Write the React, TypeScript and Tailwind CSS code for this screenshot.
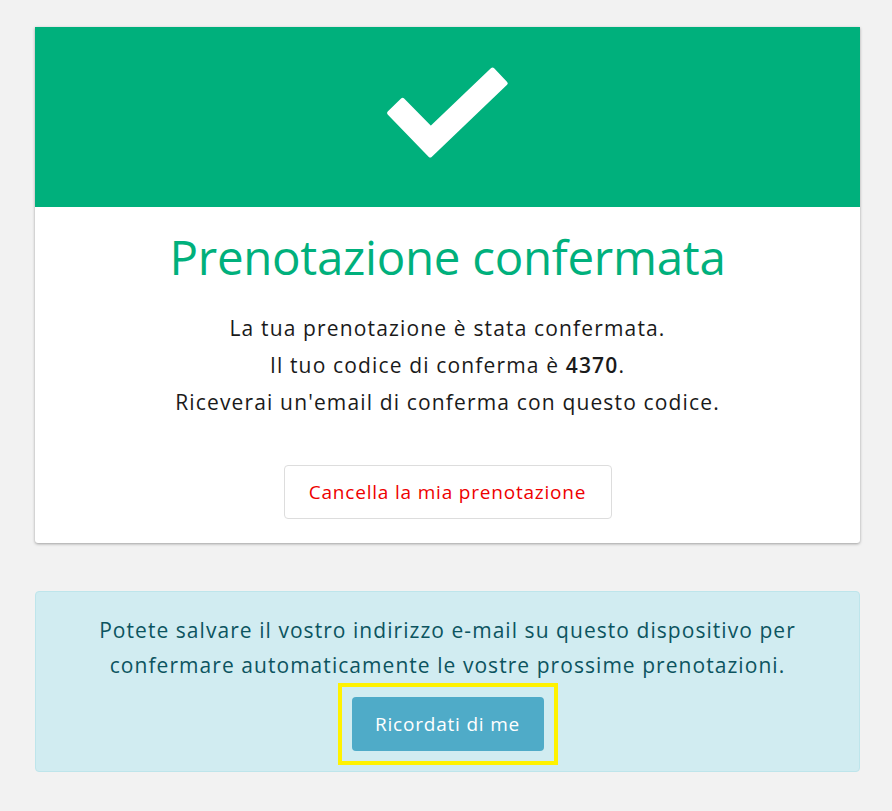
import React from "react";

export default function App() {
  return (
    <div className="min-h-[811px] w-full bg-[#f2f2f2] pl-[35px] pr-[32px] pt-[27px] pb-[38px]" style={{ fontFamily: "'Open Sans', Lato, sans-serif" }}>
      <div className="bg-white rounded-b-[3px] shadow-[0_1px_3px_rgba(0,0,0,0.35)]">
        <div className="h-[180px] bg-[#00b07c] flex items-center justify-center">
          <svg width="130" height="110" viewBox="0 0 130 110">
            <polygon
              points="6.1,51 19.7,37.8 47.75,66.5 109.5,7.5 122.7,21.3 47.25,93.5"
              fill="#fff"
              stroke="#fff"
              strokeWidth="4"
              strokeLinejoin="round"
            />
          </svg>
        </div>
        <div className="flex flex-col items-center pt-[19px] pb-[24px]">
          <h1 className="text-[47.5px] leading-[62px] text-[#00b07c] font-normal tracking-[-0.3px]">Prenotazione confermata</h1>
          <div className="mt-[22px] text-center text-[21px] leading-[37px] text-[#1a1a1a] tracking-[1.15px]">
            <p>La tua prenotazione è stata confermata.</p>
            <p>
              Il tuo codice di conferma è <b className="font-semibold">4370</b>.
            </p>
            <p>Riceverai un'email di conferma con questo codice.</p>
          </div>
          <button className="mt-[44px] h-[54px] w-[328px] rounded-[4px] border border-[#dddddd] bg-white text-[19px] tracking-[0.8px] text-[#ee0000]">
            Cancella la mia prenotazione
          </button>
        </div>
      </div>
      <div className="mt-[48px] rounded-[4px] border border-[#bee5eb] bg-[#d1ecf1] pt-[21px] pb-[6px] flex flex-col items-center text-center">
        <p className="text-[21px] leading-[35px] text-[#0c5460] tracking-[1.05px]">
          Potete salvare il vostro indirizzo e-mail su questo dispositivo per
          <br />
          confermare automaticamente le vostre prossime prenotazioni.
        </p>
        <div className="mt-0 border-[4px] border-[#fff200] p-[10px]">
          <button className="h-[54px] w-[192px] rounded-[4px] bg-[#4fabc8] text-[19px] tracking-[0.8px] text-white">Ricordati di me</button>
        </div>
      </div>
    </div>
  );
}
